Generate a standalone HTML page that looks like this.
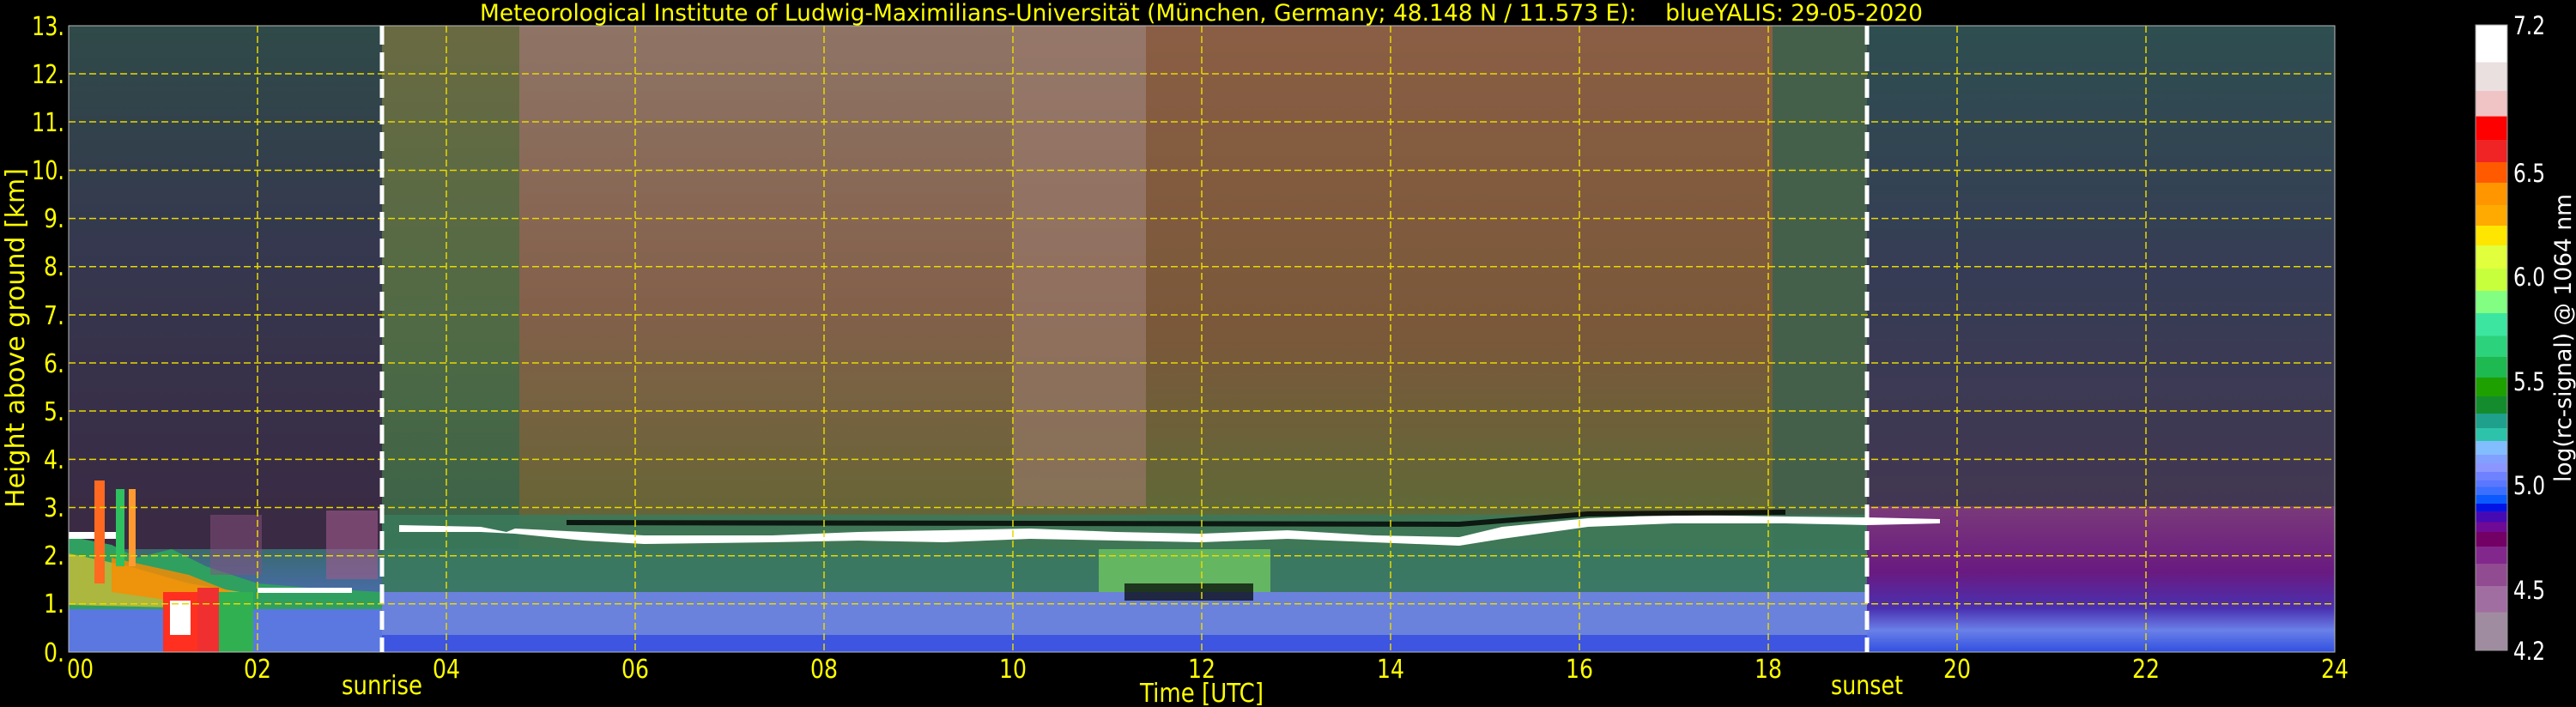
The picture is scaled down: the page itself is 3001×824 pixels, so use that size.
<!DOCTYPE html>
<html><head><meta charset="utf-8"><style>
html,body{margin:0;padding:0;background:#000;width:3001px;height:824px;overflow:hidden}
svg{display:block}
text{font-family:"DejaVu Sans","Liberation Sans",sans-serif}
</style></head><body>
<svg width="3001" height="824" viewBox="0 0 3001 824" xmlns="http://www.w3.org/2000/svg">
<defs>
<linearGradient id="n1" x1="0" y1="0" x2="0" y2="1">
<stop offset="0" stop-color="#2f4a48"/><stop offset="0.35" stop-color="#35384f"/><stop offset="0.8" stop-color="#3a2a44"/><stop offset="1" stop-color="#3d2a42"/></linearGradient>
<linearGradient id="n2" x1="0" y1="0" x2="0" y2="1">
<stop offset="0" stop-color="#6a6a42"/><stop offset="0.5" stop-color="#4f6a45"/><stop offset="1" stop-color="#2f5e4a"/></linearGradient>
<linearGradient id="d1" x1="0" y1="0" x2="0" y2="1">
<stop offset="0" stop-color="#8f7466"/><stop offset="0.45" stop-color="#83604a"/><stop offset="0.75" stop-color="#6a6438"/><stop offset="1" stop-color="#3e6a3e"/></linearGradient>
<linearGradient id="d2" x1="0" y1="0" x2="0" y2="1">
<stop offset="0" stop-color="#8a5e44"/><stop offset="0.5" stop-color="#7a583a"/><stop offset="0.8" stop-color="#5e6a38"/><stop offset="1" stop-color="#3b6a40"/></linearGradient>
<linearGradient id="n3" x1="0" y1="0" x2="0" y2="1">
<stop offset="0" stop-color="#2e4e50"/><stop offset="0.4" stop-color="#363c55"/><stop offset="1" stop-color="#4a3450"/></linearGradient>
<linearGradient id="low" x1="0" y1="0" x2="0" y2="1">
<stop offset="0" stop-color="#3a6a70"/><stop offset="0.5" stop-color="#4a6cb0"/><stop offset="0.8" stop-color="#6a84e0"/><stop offset="1" stop-color="#3a50d0"/></linearGradient>
<linearGradient id="nlow" x1="0" y1="0" x2="0" y2="1">
<stop offset="0" stop-color="#7a3a7a"/><stop offset="0.45" stop-color="#6a1a80"/><stop offset="0.7" stop-color="#4a30b0"/><stop offset="0.85" stop-color="#6a80e8"/><stop offset="1" stop-color="#3050e0"/></linearGradient>
</defs>
<rect x="80" y="30" width="2640" height="730" fill="#000"/>
<rect x="80" y="30" width="365" height="730" fill="url(#n1)"/>
<rect x="445" y="30" width="160" height="730" fill="url(#n2)"/>
<rect x="605" y="30" width="730" height="730" fill="url(#d1)"/>
<rect x="1180" y="30" width="180" height="560" fill="#9a7a6c" opacity="0.6"/>
<rect x="1335" y="30" width="730" height="730" fill="url(#d2)"/>
<rect x="2065" y="30" width="110" height="730" fill="#45604a"/>
<rect x="2175" y="30" width="545" height="730" fill="url(#n3)"/>
<rect x="80" y="640" width="2640" height="120" fill="url(#low)"/>
<rect x="445" y="600" width="1750" height="100" fill="#3a7a5c" opacity="0.85"/>
<rect x="445" y="690" width="1750" height="70" fill="#6a82dc"/>
<rect x="445" y="740" width="1750" height="20" fill="#3d55e0"/>
<rect x="2175" y="590" width="545" height="170" fill="url(#nlow)"/>
<rect x="80" y="700" width="365" height="60" fill="#5a78e0"/>
<path d="M80 625 L130 635 L160 650 L200 640 L240 660 L300 680 L360 685 L445 690 L445 710 L80 710Z" fill="#2fa060"/>
<path d="M80 645 L150 660 L220 680 L280 690 L280 710 L80 705Z" fill="#e0c030" opacity="0.7"/>
<path d="M130 650 L220 670 L270 690 L200 700 L130 690Z" fill="#ff8a00" opacity="0.8"/>
<rect x="80" y="620" width="60" height="8" fill="#fff"/>
<rect x="110" y="560" width="12" height="120" fill="#ff6a20"/>
<rect x="135" y="570" width="10" height="90" fill="#2fc060"/>
<rect x="150" y="570" width="8" height="90" fill="#ff9a30"/>
<rect x="190" y="690" width="50" height="70" fill="#ff3020"/>
<rect x="198" y="700" width="24" height="40" fill="#fff"/>
<rect x="230" y="685" width="25" height="75" fill="#f03030"/>
<rect x="255" y="690" width="40" height="70" fill="#30b050"/>
<rect x="245" y="600" width="60" height="70" fill="#8a5080" opacity="0.5"/>
<rect x="380" y="595" width="60" height="80" fill="#a05a8c" opacity="0.6"/>
<rect x="300" y="685" width="110" height="6" fill="#fff"/>
<path d="M465 612 L560 614 L590 620 L600 616 L680 620 L750 624 L900 624 L1000 620 L1100 618 L1200 616 L1300 620 L1400 622 L1500 618 L1600 624 L1700 626 L1750 614 L1850 604 L1950 600 L2080 602 L2175 603 L2260 605 L2260 610 L2175 612 L2080 610 L1950 610 L1850 614 L1750 628 L1700 636 L1600 632 L1500 628 L1400 632 L1300 630 L1200 628 L1100 632 L1000 630 L900 632 L750 634 L680 630 L600 622 L560 620 L465 620 Z" fill="#fff"/>
<path d="M660 606 L1700 608 L1850 596 L2080 594 L2080 600 L1850 602 L1700 614 L660 612Z" fill="#000" opacity="0.8"/>
<rect x="1280" y="640" width="200" height="50" fill="#80e060" opacity="0.6"/>
<rect x="1310" y="680" width="150" height="20" fill="#000" opacity="0.7"/>
<g stroke="#e8d800" stroke-width="1.5" stroke-dasharray="8,4" fill="none">
<path d="M80 86H2720M80 142H2720M80 198.5H2720M80 254.6H2720M80 310.8H2720M80 367H2720M80 423H2720M80 479H2720M80 535.4H2720M80 591.5H2720M80 647.7H2720M80 703.8H2720"/>
<path d="M300 30V760M520 30V760M740 30V760M960 30V760M1180 30V760M1400 30V760M1620 30V760M1840 30V760M2060 30V760M2280 30V760M2500 30V760"/>
</g>
<rect x="80" y="30" width="2640" height="730" fill="none" stroke="#bbb" stroke-width="1"/>
<g stroke="#fff" stroke-width="5" stroke-dasharray="22,9">
<line x1="445" y1="30" x2="445" y2="760"/><line x1="2175" y1="30" x2="2175" y2="760"/>
</g>
<text x="559" y="24" fill="#ffff00" font-size="27" textLength="1681" lengthAdjust="spacingAndGlyphs" xml:space="preserve">Meteorological Institute of Ludwig-Maximilians-Universität (München, Germany; 48.148 N / 11.573 E):    blueYALIS: 29-05-2020</text>
<g fill="#ffff00" font-size="30" lengthAdjust="spacingAndGlyphs">
<text x="37" y="41" textLength="38" lengthAdjust="spacingAndGlyphs">13.</text>
<text x="37" y="97" textLength="38" lengthAdjust="spacingAndGlyphs">12.</text>
<text x="37" y="153" textLength="38" lengthAdjust="spacingAndGlyphs">11.</text>
<text x="37" y="209" textLength="38" lengthAdjust="spacingAndGlyphs">10.</text>
<text x="51" y="265" textLength="24" lengthAdjust="spacingAndGlyphs">9.</text>
<text x="51" y="321" textLength="24" lengthAdjust="spacingAndGlyphs">8.</text>
<text x="51" y="378" textLength="24" lengthAdjust="spacingAndGlyphs">7.</text>
<text x="51" y="434" textLength="24" lengthAdjust="spacingAndGlyphs">6.</text>
<text x="51" y="490" textLength="24" lengthAdjust="spacingAndGlyphs">5.</text>
<text x="51" y="546" textLength="24" lengthAdjust="spacingAndGlyphs">4.</text>
<text x="51" y="602" textLength="24" lengthAdjust="spacingAndGlyphs">3.</text>
<text x="51" y="658" textLength="24" lengthAdjust="spacingAndGlyphs">2.</text>
<text x="51" y="714" textLength="24" lengthAdjust="spacingAndGlyphs">1.</text>
<text x="51" y="771" textLength="24" lengthAdjust="spacingAndGlyphs">0.</text>
</g>
<text transform="translate(28,394) rotate(-90)" fill="#ffff00" font-size="30" text-anchor="middle" font-family="Liberation Sans">Height above ground [km]</text>
<g fill="#ffff00" font-size="30">
<text x="78" y="790" textLength="31" lengthAdjust="spacingAndGlyphs">00</text>
<text x="284" y="790" textLength="32" lengthAdjust="spacingAndGlyphs">02</text>
<text x="504" y="790" textLength="32" lengthAdjust="spacingAndGlyphs">04</text>
<text x="724" y="790" textLength="32" lengthAdjust="spacingAndGlyphs">06</text>
<text x="944" y="790" textLength="32" lengthAdjust="spacingAndGlyphs">08</text>
<text x="1164" y="790" textLength="32" lengthAdjust="spacingAndGlyphs">10</text>
<text x="1384" y="790" textLength="32" lengthAdjust="spacingAndGlyphs">12</text>
<text x="1604" y="790" textLength="32" lengthAdjust="spacingAndGlyphs">14</text>
<text x="1824" y="790" textLength="32" lengthAdjust="spacingAndGlyphs">16</text>
<text x="2044" y="790" textLength="32" lengthAdjust="spacingAndGlyphs">18</text>
<text x="2264" y="790" textLength="32" lengthAdjust="spacingAndGlyphs">20</text>
<text x="2484" y="790" textLength="32" lengthAdjust="spacingAndGlyphs">22</text>
<text x="2704" y="790" textLength="32" lengthAdjust="spacingAndGlyphs">24</text>
<text x="398" y="809" textLength="94" lengthAdjust="spacingAndGlyphs">sunrise</text>
<text x="2133" y="809" textLength="84" lengthAdjust="spacingAndGlyphs">sunset</text>
<text x="1328" y="818" textLength="144" lengthAdjust="spacingAndGlyphs">Time [UTC]</text>
</g>
<g>
<rect x="2884" y="29" width="37" height="44" fill="#ffffff"/>
<rect x="2884" y="72.5" width="37" height="34" fill="#ebe0e0"/>
<rect x="2884" y="106" width="37" height="30" fill="#f0c4c4"/>
<rect x="2884" y="135.6" width="37" height="28" fill="#ff0000"/>
<rect x="2884" y="163" width="37" height="26" fill="#f02424"/>
<rect x="2884" y="189" width="37" height="24" fill="#ff5a00"/>
<rect x="2884" y="213" width="37" height="26" fill="#ff9600"/>
<rect x="2884" y="239" width="37" height="24" fill="#ffaa00"/>
<rect x="2884" y="263" width="37" height="23" fill="#ffe600"/>
<rect x="2884" y="286" width="37" height="27" fill="#e1ff3c"/>
<rect x="2884" y="313" width="37" height="26" fill="#c8ff3c"/>
<rect x="2884" y="339" width="37" height="26" fill="#82ff82"/>
<rect x="2884" y="365" width="37" height="27" fill="#3ce6a0"/>
<rect x="2884" y="391.5" width="37" height="25" fill="#2dd27d"/>
<rect x="2884" y="416" width="37" height="24" fill="#1eb950"/>
<rect x="2884" y="440" width="37" height="22" fill="#1ea000"/>
<rect x="2884" y="462" width="37" height="20" fill="#148c2d"/>
<rect x="2884" y="482" width="37" height="17" fill="#1ea08c"/>
<rect x="2884" y="499" width="37" height="15" fill="#2dc3aa"/>
<rect x="2884" y="514" width="37" height="16" fill="#82beff"/>
<rect x="2884" y="530" width="37" height="10" fill="#82a0ff"/>
<rect x="2884" y="540" width="37" height="10" fill="#8c96ff"/>
<rect x="2884" y="550" width="37" height="10" fill="#6e82ff"/>
<rect x="2884" y="560" width="37" height="8" fill="#5a78ff"/>
<rect x="2884" y="567.5" width="37" height="10" fill="#3c6eff"/>
<rect x="2884" y="577" width="37" height="10" fill="#0a5aff"/>
<rect x="2884" y="587" width="37" height="9" fill="#0014e6"/>
<rect x="2884" y="596" width="37" height="13" fill="#460ab4"/>
<rect x="2884" y="608.5" width="37" height="12" fill="#6e0a96"/>
<rect x="2884" y="620" width="37" height="17" fill="#730064"/>
<rect x="2884" y="637" width="37" height="20" fill="#82288c"/>
<rect x="2884" y="657" width="37" height="26" fill="#914b91"/>
<rect x="2884" y="683" width="37" height="31" fill="#a06ea0"/>
<rect x="2884" y="713.6" width="37" height="44.4" fill="#a08ca0"/>
<rect x="2884" y="29" width="37" height="729" fill="none" stroke="#999" stroke-width="1"/>
</g>
<g fill="#fff" font-size="29">
<text x="2928" y="40" textLength="37" lengthAdjust="spacingAndGlyphs">7.2</text>
<text x="2928" y="212" textLength="37" lengthAdjust="spacingAndGlyphs">6.5</text>
<text x="2928" y="333" textLength="37" lengthAdjust="spacingAndGlyphs">6.0</text>
<text x="2928" y="455" textLength="37" lengthAdjust="spacingAndGlyphs">5.5</text>
<text x="2928" y="576" textLength="37" lengthAdjust="spacingAndGlyphs">5.0</text>
<text x="2928" y="698" textLength="37" lengthAdjust="spacingAndGlyphs">4.5</text>
<text x="2928" y="769" textLength="37" lengthAdjust="spacingAndGlyphs">4.2</text>
</g>
<text transform="translate(2995,562) rotate(-90)" fill="#fff" font-size="27" font-family="Liberation Sans" textLength="336" lengthAdjust="spacingAndGlyphs">log(rc-signal) @ 1064 nm</text>
</svg>
</body></html>
